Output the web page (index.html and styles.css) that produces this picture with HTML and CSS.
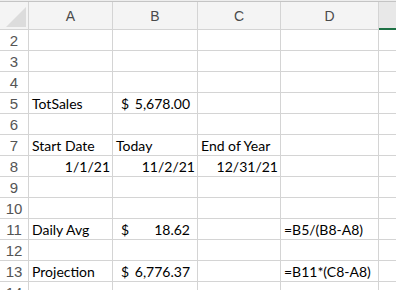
FILE: index.html
```html
<!DOCTYPE html>
<html lang="en">
<head>
    <meta charset="UTF-8">
    <title>Sales Projection</title>
    <link rel="stylesheet" href="styles.css">
</head>
<body>
    <div class="sheet">
        <!-- Column headers -->
        <div class="corner"><span class="corner-mark"></span></div>
        <div class="col-head">A</div>
        <div class="col-head">B</div>
        <div class="col-head">C</div>
        <div class="col-head">D</div>
        <div class="col-head selected"></div>

        <!-- Row 2 -->
        <div class="row-head">2</div>
        <div class="cell"></div><div class="cell"></div><div class="cell"></div><div class="cell"></div><div class="cell"></div>

        <!-- Row 3 -->
        <div class="row-head">3</div>
        <div class="cell"></div><div class="cell"></div><div class="cell"></div><div class="cell"></div><div class="cell"></div>

        <!-- Row 4 -->
        <div class="row-head">4</div>
        <div class="cell"></div><div class="cell"></div><div class="cell"></div><div class="cell"></div><div class="cell"></div>

        <!-- Row 5 -->
        <div class="row-head">5</div>
        <div class="cell">TotSales</div>
        <div class="cell money"><span>$</span><span>5,678.00</span></div>
        <div class="cell"></div><div class="cell"></div><div class="cell"></div>

        <!-- Row 6 -->
        <div class="row-head">6</div>
        <div class="cell"></div><div class="cell"></div><div class="cell"></div><div class="cell"></div><div class="cell"></div>

        <!-- Row 7 -->
        <div class="row-head">7</div>
        <div class="cell">Start Date</div>
        <div class="cell">Today</div>
        <div class="cell">End of Year</div>
        <div class="cell"></div><div class="cell"></div>

        <!-- Row 8 -->
        <div class="row-head">8</div>
        <div class="cell num">1/1/21</div>
        <div class="cell num">11/2/21</div>
        <div class="cell num">12/31/21</div>
        <div class="cell"></div><div class="cell"></div>

        <!-- Row 9 -->
        <div class="row-head">9</div>
        <div class="cell"></div><div class="cell"></div><div class="cell"></div><div class="cell"></div><div class="cell"></div>

        <!-- Row 10 -->
        <div class="row-head">10</div>
        <div class="cell"></div><div class="cell"></div><div class="cell"></div><div class="cell"></div><div class="cell"></div>

        <!-- Row 11 -->
        <div class="row-head">11</div>
        <div class="cell">Daily Avg</div>
        <div class="cell money"><span>$</span><span>18.62</span></div>
        <div class="cell"></div>
        <div class="cell">=B5/(B8-A8)</div>
        <div class="cell"></div>

        <!-- Row 12 -->
        <div class="row-head">12</div>
        <div class="cell"></div><div class="cell"></div><div class="cell"></div><div class="cell"></div><div class="cell"></div>

        <!-- Row 13 -->
        <div class="row-head">13</div>
        <div class="cell">Projection</div>
        <div class="cell money"><span>$</span><span>6,776.37</span></div>
        <div class="cell"></div>
        <div class="cell">=B11*(C8-A8)</div>
        <div class="cell"></div>

        <!-- Row 14 -->
        <div class="row-head">14</div>
        <div class="cell"></div><div class="cell"></div><div class="cell"></div><div class="cell"></div><div class="cell"></div>
    </div>
</body>
</html>
```

FILE: styles.css
```css
/* Page */
body {
    margin: 0;
    background-color: #ededed;
    overflow: hidden;
}

/* Worksheet grid, gaps act as gridlines */
.sheet {
    margin-top: 1px;
    border-top: 1px solid #c4c4c4;
    display: grid;
    grid-template-columns: 28px 83px 84px 82px 97px 1fr;
    grid-template-rows: 27px;
    grid-auto-rows: 20px;
    gap: 1px;
    background-color: #d4d4d4;
    font-family: Lato, "Liberation Sans", sans-serif;
    font-size: 14px;
    color: #000;
}

/* Header cells */
.corner,
.col-head {
    background-color: #f4f4f4;
    position: relative;
}

.corner-mark {
    position: absolute;
    right: 2px;
    bottom: 2px;
    width: 0;
    height: 0;
    border-left: 20px solid transparent;
    border-bottom: 20px solid #dcdcdc;
}

.col-head {
    display: flex;
    align-items: center;
    justify-content: center;
    font-family: "Liberation Sans", Arial, sans-serif;
    font-size: 14px;
    color: #4a4a4a;
}

.col-head.selected {
    background-color: #e8e8e8;
    box-shadow: inset 0 -1px 0 #1e7145, 0 1px 0 #1e7145;
}

.row-head {
    background-color: #fff;
    display: flex;
    align-items: center;
    justify-content: center;
    font-family: "Liberation Sans", Arial, sans-serif;
    font-size: 15px;
    color: #555;
}

/* Data cells */
.cell {
    background-color: #fff;
    display: flex;
    align-items: center;
    padding: 0 3px;
    white-space: nowrap;
    overflow: visible;
}

.cell.num {
    justify-content: flex-end;
    padding-right: 2px;
}

.cell.money {
    justify-content: space-between;
    padding: 0 7px 0 8px;
}
```
